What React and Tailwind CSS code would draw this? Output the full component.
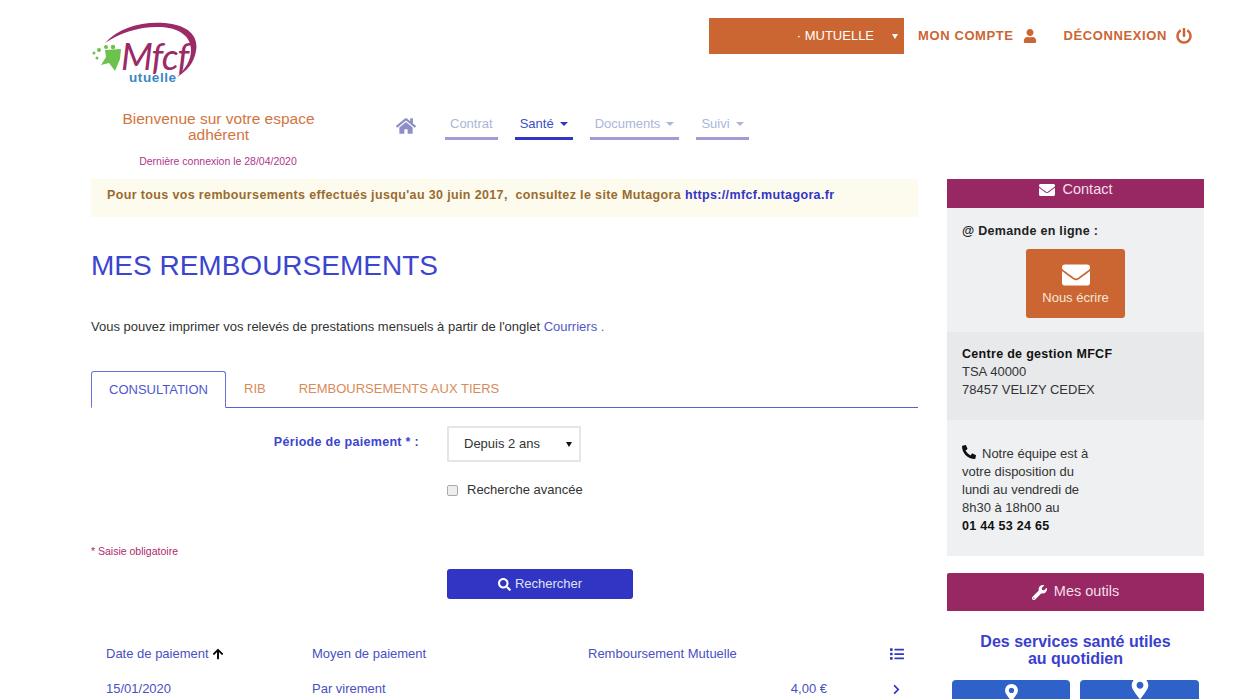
import {
  FaHome,
  FaUser,
  FaPowerOff,
  FaEnvelope,
  FaPhoneAlt,
  FaWrench,
  FaSearch,
  FaArrowUp,
  FaList,
  FaChevronRight,
  FaMapMarkerAlt,
} from "react-icons/fa";

function Logo() {
  return (
    <svg width="106" height="62" viewBox="0 0 106 62" className="block">
      {/* swoosh */}
      <path
        d="M14 22 C28 6 52 0 74 2 C96 4 108 14 105 30 C103 42 96 50 86 56 C94 48 100 40 100 29 C100 15 88 7 70 6 C50 5 30 11 14 22 Z"
        fill="#9b2a66"
      />
      {/* green figures */}
      <path d="M14 29 L30 28 L29 38 L24 50 L18 42 L10 44 L15 36 Z" fill="#6cc24a" />
      <circle cx="8" cy="29" r="2" fill="#6cc24a" />
      <circle cx="15" cy="26" r="2" fill="#6cc24a" />
      <circle cx="22" cy="26" r="2.2" fill="#6cc24a" />
      <circle cx="3" cy="32" r="1.5" fill="#6cc24a" />
      <circle cx="6" cy="37" r="1.5" fill="#6cc24a" />
      <text x="30" y="49" fill="#9b2a66" fontSize="37" fontStyle="italic" fontFamily="Lato, sans-serif" letterSpacing="-1">
        Mfcf
      </text>
      <text x="38" y="61" fill="#3b87c4" fontSize="13.5" fontWeight="700" fontFamily="'Liberation Sans', sans-serif" letterSpacing="0.6">
        utuelle
      </text>
    </svg>
  );
}

function NavItem({ label, caret, active }) {
  return (
    <a
      className={`flex items-center h-[30px] px-[5px] border-b-[3px] text-[13px] gap-[6px] ${
        active ? "border-[#3434c8] text-[#3b4fc4]" : "border-[#a09bd2] text-[#aab6da]"
      }`}
    >
      {label}
      {caret && (
        <span
          className={`w-0 h-0 border-x-4 border-x-transparent border-t-4 ${
            active ? "border-t-[#3434c8]" : "border-t-[#aab6da]"
          }`}
        />
      )}
    </a>
  );
}

export default function App() {
  return (
    <div className="h-[699px] overflow-hidden bg-white text-[#333] font-['Liberation_Sans',sans-serif] text-[13px]">
      {/* Top bar */}
      <div className="flex justify-between pl-[91px] pr-[59px] pt-[18px] h-[101px]">
        <div className="pt-[3px]">
          <Logo />
        </div>
        <div className="flex items-start">
          <div className="flex items-center justify-end w-[195px] h-[36px] bg-[#cb6632] text-white text-[13px] pr-[6px]">
            <span className="mr-[18px]">· MUTUELLE</span>
            <span className="w-0 h-0 border-x-[3px] border-x-transparent border-t-[5px] border-t-white" />
          </div>
          <a className="flex items-center h-[36px] ml-[14px] text-[#cb6632] font-bold tracking-[0.6px] gap-[9px]">
            MON COMPTE <FaUser size={14} />
          </a>
          <a className="flex items-center h-[36px] ml-[27px] text-[#cb6632] font-bold tracking-[0.6px] gap-[9px]">
            DÉCONNEXION <FaPowerOff size={16} />
          </a>
        </div>
      </div>

      {/* Welcome + nav */}
      <div className="flex pl-[91px] h-[78px]">
        <div className="w-[255px] text-center">
          <p className="text-[#d2743e] text-[15.5px] leading-[16px] mt-[10px]">
            Bienvenue sur votre espace
            <br />
            adhérent
          </p>
          <p className="text-[#b0368a] text-[10.5px] mt-[11px] pr-[1px]">Dernière connexion le 28/04/2020</p>
        </div>
        <div className="flex items-start gap-[17px] ml-[50px] pt-[9px]">
          <FaHome size={20} className="text-[#8f8fc8] mt-[6px] mr-[12px]" />
          <NavItem label="Contrat" />
          <NavItem label="Santé" caret active />
          <NavItem label="Documents" caret />
          <NavItem label="Suivi" caret />
        </div>
      </div>

      <div className="flex pl-[91px] gap-[29px]">
        {/* Main column */}
        <div className="w-[827px]">
          <div className="h-[38px] bg-[#fdfbee] pl-[16px] pt-[7px] font-bold text-[12.5px] tracking-[0.36px] text-[#9a6b2f]">
            Pour tous vos remboursements effectués jusqu'au 30 juin 2017,&nbsp; consultez le site Mutagora{" "}
            <a className="text-[#3434c8]">https://mfcf.mutagora.fr</a>
          </div>

          <h1 className="text-[#3b45d0] text-[28px] leading-[32px] mt-[33px]">MES REMBOURSEMENTS</h1>

          <p className="mt-[36px] text-[13px] leading-[18px] text-[#333]">
            Vous pouvez imprimer vos relevés de prestations mensuels à partir de l'onglet{" "}
            <a className="text-[#5257c8]">Courriers .</a>
          </p>

          {/* Tabs */}
          <div className="flex items-end h-[37px] mt-[35px] border-b border-[#5a5fd8]">
            <a className="flex items-center justify-center w-[135px] h-[37px] -mb-px bg-white border border-b-white border-[#6a70dc] rounded-t-[3px] text-[#4f57cf]">
              CONSULTATION
            </a>
            <a className="flex items-center h-[36px] ml-[18px] text-[#d88b58]">RIB</a>
            <a className="flex items-center h-[36px] ml-[33px] text-[#d88b58]">REMBOURSEMENTS AUX TIERS</a>
          </div>

          {/* Form */}
          <div className="flex mt-[18px]">
            <div className="w-[356px] pr-[28px] text-right pt-[7px] font-bold text-[12.5px] tracking-[0.3px] text-[#3b45d0]">
              Période de paiement * :
            </div>
            <div className="flex flex-col">
              <div className="flex items-center justify-between w-[134px] h-[36px] border-2 border-[#e6e6e6] pl-[15px] pr-[7px] text-[#333]">
                Depuis 2 ans
                <span className="w-0 h-0 border-x-[3px] border-x-transparent border-t-[5px] border-t-[#111]" />
              </div>
              <label className="flex items-center gap-[9px] mt-[20px] leading-[16px]">
                <span className="w-[11px] h-[11px] rounded-[2px] border border-[#aaa] bg-[#eee]" />
                Recherche avancée
              </label>
            </div>
          </div>

          <p className="text-[#b0286e] text-[10.5px] leading-[12px] mt-[47px]">* Saisie obligatoire</p>

          <div className="pl-[356px] mt-[12px]">
            <button className="flex items-center justify-center gap-[4px] w-[186px] h-[30px] rounded-[3px] bg-[#3035c4] text-[#dfe2f5]">
              <FaSearch size={13} className="text-white" /> Rechercher
            </button>
          </div>

          {/* Table */}
          <div className="grid grid-cols-[206px_276px_240px_1fr] pl-[15px] mt-[47px] text-[#4a4fc4] leading-[16px]">
            <span className="flex items-center gap-[3px]">
              Date de paiement <FaArrowUp size={12} className="text-black" />
            </span>
            <span>Moyen de paiement</span>
            <span>Remboursement Mutuelle</span>
            <span className="flex justify-end pr-[14px] items-center">
              <FaList size={14} className="text-[#3434c8]" />
            </span>
          </div>
          <div className="grid grid-cols-[206px_276px_240px_1fr] pl-[15px] mt-[19px] text-[#4a4fc4] leading-[16px]">
            <span>15/01/2020</span>
            <span>Par virement</span>
            <span className="text-right -mr-[0px] col-span-1 pl-[0px]">
              <span className="relative left-[-1px]">
                <span className="inline-block w-[240px] text-right pr-[-4px]">4,00 €</span>
              </span>
            </span>
            <span className="flex justify-end pr-[16px] items-center">
              <FaChevronRight size={11} className="text-[#3434c8]" />
            </span>
          </div>
        </div>

        {/* Sidebar */}
        <aside className="w-[257px]">
          <div className="flex items-center justify-center gap-[8px] h-[29px] pb-[9px] pt-[1px] bg-[#982863] text-[#f3dfe9] text-[14.5px]">
            <FaEnvelope size={16} className="text-white" /> Contact
          </div>
          <div className="h-[124px] bg-[#eff0f2] pt-[16px]">
            <p className="pl-[15px] font-bold text-[12.5px] tracking-[0.3px] leading-[14px] text-[#222]">
              @ Demande en ligne :
            </p>
            <div className="flex flex-col items-center w-[99px] h-[69px] mx-auto mt-[11px] rounded-[3px] bg-[#cb6632] text-[#f7e6db] pt-[12px]">
              <FaEnvelope size={28} className="text-white" />
              <span className="leading-[15px] mt-[1px]">Nous écrire</span>
            </div>
          </div>
          <div className="h-[88px] bg-[#e8e9eb] pl-[15px] pt-[13px] leading-[18px] text-[#333]">
            <b className="text-[#111] font-bold tracking-[0.3px] text-[12.5px]">Centre de gestion MFCF</b>
            <br />
            TSA 40000
            <br />
            78457 VELIZY CEDEX
          </div>
          <div className="h-[136px] bg-[#eff0f2] pl-[15px] pt-[25px] leading-[18px] text-[#333]">
            <FaPhoneAlt size={14} className="inline text-[#111] mr-[6px] align-[-1px]" />
            Notre équipe est à
            <br />
            votre disposition du
            <br />
            lundi au vendredi de
            <br />
            8h30 à 18h00 au
            <br />
            <b className="text-[#111] tracking-[0.3px] text-[12.5px]">01 44 53 24 65</b>
          </div>

          <div className="flex items-center justify-center gap-[7px] h-[38px] mt-[17px] rounded-t-[2px] bg-[#982863] text-[#f3dfe9] text-[14.5px]">
            <FaWrench size={15} className="text-white" /> Mes outils
          </div>
          <p className="mt-[22px] text-center text-[16px] leading-[17px] font-bold text-[#3a3fce]">
            Des services santé utiles
            <br />
            au quotidien
          </p>
          <div className="flex gap-[10px] px-[5px] mt-[13px]">
            <div className="flex justify-center w-[118px] h-[40px] pt-[4px] rounded-t-[4px] bg-[#2f62c8]">
              <FaMapMarkerAlt size={17} className="text-white" />
            </div>
            <div className="flex justify-center w-[119px] h-[40px] rounded-t-[4px] bg-[#2f62c8] overflow-hidden">
              <FaMapMarkerAlt size={22} className="text-white -mt-[3px]" />
            </div>
          </div>
        </aside>
      </div>
    </div>
  );
}
